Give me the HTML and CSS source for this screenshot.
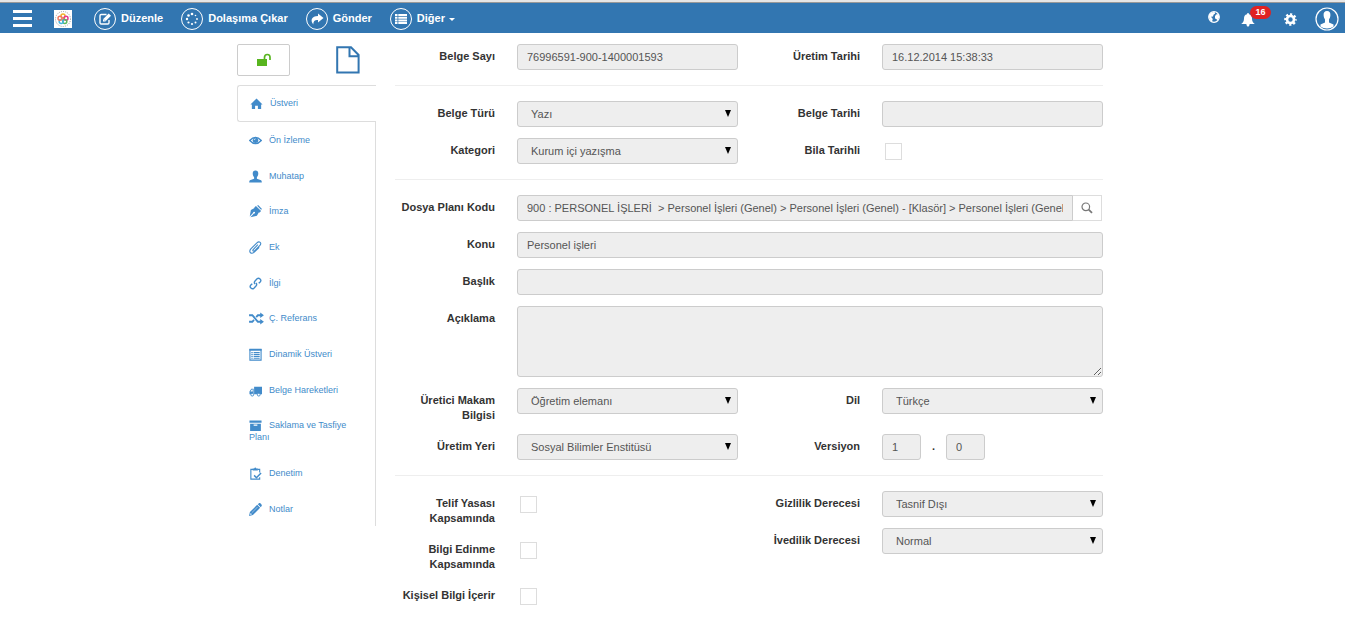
FILE: index.html
```html
<!DOCTYPE html>
<html lang="tr">
<head>
<meta charset="utf-8">
<title>Belge</title>
<link rel="stylesheet" href="styles.css">
</head>
<body>
<header class="topbar">
  <button class="menu-btn" aria-label="Menü"><span class="bar"></span><span class="bar"></span><span class="bar"></span></button>
  <a href="#" class="logo" aria-label="Ana sayfa">
    <svg width="18" height="18" viewBox="0 0 18 18"><rect width="18" height="18" fill="#fff"/><circle cx="9" cy="9" r="7.5" fill="none" stroke="#9a9a9a" stroke-width="1" stroke-dasharray="1 1.2"/><g fill="none" stroke-width="1.5"><circle cx="9" cy="6" r="2" stroke="#f0b429"/><circle cx="12" cy="8.3" r="2" stroke="#e5398d"/><circle cx="10.8" cy="11.6" r="2" stroke="#5cb85c"/><circle cx="7.2" cy="11.6" r="2" stroke="#45b5e0"/><circle cx="6" cy="8.3" r="2" stroke="#ee7b62"/></g></svg>
  </a>
  <nav class="actions">
    <button class="action"><span class="ring"><svg width="14" height="14" viewBox="0 0 14 14"><path d="M8.5 2.5H3.2Q2 2.5 2 3.7v7Q2 12 3.2 12h6.6q1.2 0 1.2-1.2V8" fill="none" stroke="#fff" stroke-width="1.4"/><path d="M5 9.5V7.2L10.7 1.5 13 3.8 7.3 9.5z" fill="#fff"/><path d="M6 7.6l1 1" stroke="#3276b1" stroke-width=".8"/></svg></span>Düzenle</button>
    <button class="action"><span class="ring"><svg width="14" height="14" viewBox="0 0 14 14" fill="#fff"><circle cx="7" cy="2" r="1.3"/><circle cx="10.5" cy="3.5" r=".8"/><circle cx="12" cy="7" r=".9"/><circle cx="10.5" cy="10.5" r="1"/><circle cx="7" cy="12" r="1.1"/><circle cx="3.5" cy="10.5" r="1.1"/><circle cx="2" cy="7" r="1.2"/><circle cx="3.5" cy="3.5" r="1.3"/></svg></span>Dolaşıma Çıkar</button>
    <button class="action"><span class="ring"><svg width="14" height="14" viewBox="0 0 14 14"><path d="M8 1.5L13.5 6 8 10.5V8C4.5 8 3.3 9.2 3.4 12.5 0 8.500 1.500 4.200 8 4z" fill="#fff"/></svg></span>Gönder</button>
    <button class="action"><span class="ring"><svg width="14" height="14" viewBox="0 0 14 14"><path d="M1 2h2.500v2H1zM4.300 2H13v2H4.300zM1 4.700h2.500v2H1zM4.300 4.700H13v2H4.300zM1 7.400h2.500v2H1zM4.300 7.400H13v2H4.300zM1 10.100h2.500v2H1zM4.300 10.100H13v2H4.300z" fill="#fff"/></svg></span>Diğer<span class="caret"></span></button>
  </nav>
  <div class="tools">
    <button class="tool globe" aria-label="Dil"><svg width="12" height="12" viewBox="0 0 12 12"><circle cx="6" cy="6" r="5.300" fill="#3276b1" stroke="#fff" stroke-width="1.200"/><path d="M1 4.500Q3 .8 6.500 1L7.200 2.500 5.500 3.800 5 5.500 3 5.800 4.800 8 4 10.500Q.8 8.500 1 4.500zM8 3.500L10.500 3 11.300 6 9.500 9.500 8.300 8 7 7.500 7 5.300z" fill="#fff"/></svg></button>
    <button class="tool bell" aria-label="Bildirimler"><svg width="14" height="14" viewBox="0 0 14 14"><path d="M7 0q1 0 1 1.200C10.200 1.700 11 3.300 11 5.500c0 2.700 1 4 2.800 5.500H.2C2 9.500 3 8.200 3 5.500 3 3.300 3.800 1.700 6 1.200Q6 0 7 0zM5.300 11h3.400Q8.300 13.800 7 13.800T5.300 11z" fill="#fff"/></svg><span class="badge">16</span></button>
    <button class="tool gear" aria-label="Ayarlar"><svg width="13" height="13" viewBox="0 0 13 13"><circle cx="6.500" cy="6.500" r="3.500" fill="none" stroke="#fff" stroke-width="2.600"/><circle cx="6.500" cy="6.500" r="5.300" fill="none" stroke="#fff" stroke-width="2" stroke-dasharray="2.200 1.963" stroke-dashoffset="1.100"/></svg></button>
    <button class="tool user" aria-label="Profil"><svg width="24" height="24" viewBox="0 0 24 24"><circle cx="12" cy="12" r="11" fill="none" stroke="#fff" stroke-width="1.200"/><path d="M12 4c2.500 0 3.600 1.700 3.400 4.300-.1 2-.7 3.200-1.400 4.100v3.200l4.500 2v1.900Q16 21.500 12 21.500T5.500 19.500v-1.900l4.500-2v-3.200c-.7-.9-1.300-2.100-1.400-4.100C8.400 5.700 9.500 4 12 4z" fill="#fff"/></svg></button>
  </div>
</header>

<main class="page">
  <aside class="side">
    <div class="side-head">
      <button class="lock" aria-label="Kilit"><svg width="16" height="14" viewBox="0 0 16 14"><rect x="1" y="6" width="10" height="7" fill="#58b51f"/><path d="M8.500 6V4.500Q8.500 1.500 11.300 1.500T14 4.500V7" fill="none" stroke="#58b51f" stroke-width="1.700"/></svg></button>
      <svg width="24" height="28" viewBox="0 0 24 28"><path d="M1.200 1.200H15L22.600 9V26.600H1.200zM13.500 1.200V10.200H22.600" fill="none" stroke="#3276b1" stroke-width="2"/></svg>
    </div>
    <ul class="tabs">
      <li class="tab active"><a href="#"><svg class="ico" viewBox="0 0 14 14"><path d="M7 1.500L13.500 8H12v5H8.500V9.500h-3V13H2V8H.5z"/></svg>Üstveri</a></li>
      <li class="tab"><a href="#"><svg class="ico" viewBox="0 0 14 14"><path d="M.8 7Q7 .2 13.200 7 7 13.800 .8 7z" fill="none" stroke="currentColor" stroke-width="1.500"/><circle cx="7" cy="6.800" r="3"/><path d="M5.500 6.500Q5.600 5.300 7 5.200" fill="none" stroke="#fff" stroke-width=".8"/></svg>Ön İzleme</a></li>
      <li class="tab"><a href="#"><svg class="ico" viewBox="0 0 14 14"><path d="M7 .5c2 0 3 1.300 3 3.300 0 1.800-.8 3.200-1.500 4V9.300l4.500 1.800q.8.500.8 2.400H.2q0-1.900.8-2.400l4.500-1.800V7.800C4.800 7 4 5.600 4 3.800 4 1.800 5 .5 7 .5z"/></svg>Muhatap</a></li>
      <li class="tab"><a href="#"><svg class="ico" viewBox="0 0 14 14"><path d="M7.500 1L13 6.500 11.500 8 10.500 8 8.500 11.500 1.500 13.200 5.300 9.200A1 1 0 1 0 4.500 8.400L.8 12.500 2 5.500 5.500 3.500 6 2.500zM8.800 .8L9.800 0l4.200 4.200-1 1z"/></svg>İmza</a></li>
      <li class="tab"><a href="#"><svg class="ico" viewBox="0 0 14 14"><path d="M9.500 4L4.500 9.300Q3.700 10.300 4.500 10.800T6.300 10.300L11.500 5Q13.500 2.800 12 1.500T8.500 2L2 8.500Q0 10.800 1.500 12.500T5.700 12L11 6.800" fill="none" stroke="currentColor" stroke-width="1.200"/></svg>Ek</a></li>
      <li class="tab"><a href="#"><svg class="ico" viewBox="0 0 14 14"><g fill="none" stroke="currentColor" stroke-width="1.500"><path d="M6.500 7.500Q5 5.800 6.500 4.200L8.700 2Q10.200 .6 11.900 2.100T12 5.300L10.500 6.800"/><path d="M7.500 6.500Q9 8.200 7.500 9.800L5.300 12Q3.800 13.400 2.100 11.900T2 8.700L3.500 7.200"/></g></svg>İlgi</a></li>
      <li class="tab"><a href="#"><svg class="ico wide" viewBox="0 0 16 14"><path d="M0 3.500h3.500L9.500 10.500H13M0 10.500h3.500L5.300 8.400M7.700 5.600L9.500 3.500H13" fill="none" stroke="currentColor" stroke-width="2"/><path d="M12 .5l4 3-4 3zM12 7.500l4 3-4 3z"/></svg>Ç. Referans</a></li>
      <li class="tab"><a href="#"><svg class="ico" viewBox="0 0 14 14"><path d="M1 1.500h12v11.500H1z" fill="none" stroke="currentColor" stroke-width="1.200"/><path d="M.5 1h13v2H.5zM2.500 4.200h1.500v1.300H2.500zM5 4.200h6.500v1.200H5zM2.500 6.300h1.500v1.300H2.500zM5 6.300h6.500v1.200H5zM2.500 8.400h1.500v1.300H2.500zM5 8.400h6.500v1.200H5zM2.500 10.500h1.500v1.200H2.500zM5 10.500h6.500v1.200H5z"/></svg>Dinamik Üstveri</a></li>
      <li class="tab"><a href="#"><svg class="ico" viewBox="0 0 14 14"><path d="M5.500 3H14v8H5.500zM5 5v6H.5V8L2.500 5zM4 6H3L1.600 8H4z" fill-rule="evenodd"/><circle cx="3.500" cy="11.500" r="1.500" fill="#fff" stroke="currentColor"/><circle cx="10.500" cy="11.500" r="1.500" fill="#fff" stroke="currentColor"/></svg>Belge Hareketleri</a></li>
      <li class="tab long"><a href="#"><svg class="ico" viewBox="0 0 14 14"><path d="M.5 1.500h13V4H.5zM1.200 5h11.600v8H1.200zM5 6v1.300h4V6z" fill-rule="evenodd"/></svg>Saklama ve Tasfiye Planı</a></li>
      <li class="tab"><a href="#"><svg class="ico" viewBox="0 0 14 14"><path d="M4.500 2.500H2v10.500h9.500V11M11.500 6V2.500H9" fill="none" stroke="currentColor" stroke-width="1.200"/><path d="M4 1.500h1.500Q6.800-.5 8 1.500h1.500v2.300H4z"/><path d="M5.500 9l2.500 2.500L13 6.500" fill="none" stroke="currentColor" stroke-width="1.600"/></svg>Denetim</a></li>
      <li class="tab"><a href="#"><svg class="ico" viewBox="0 0 14 14"><path d="M0 14L1 9.800 8.800 2 12 5.200 4.200 13zM9.500 1.300L11 0Q12-.2 13 1t.8 2L12.700 4.500zM1.800 10.800L1.200 12.800 3.200 12.200z" fill-rule="evenodd"/><path d="M3 10.500L9.300 4.200" stroke="#fff" stroke-width=".5"/></svg>Notlar</a></li>
    </ul>
  </aside>

  <form class="form">
    <section class="group">
      <label for="sayi">Belge Sayı</label>
      <input class="field" id="sayi" type="text" value="76996591-900-1400001593" disabled>
      <label for="uretim">Üretim Tarihi</label>
      <input class="field" id="uretim" type="text" value="16.12.2014 15:38:33" disabled>
    </section>
    <section class="group">
      <label for="tur">Belge Türü</label>
      <span class="pick"><select class="field" id="tur" disabled><option>Yazı</option></select></span>
      <label for="tarih">Belge Tarihi</label>
      <input class="field" id="tarih" type="text" disabled>
      <label for="kategori">Kategori</label>
      <span class="pick"><select class="field" id="kategori" disabled><option>Kurum içi yazışma</option></select></span>
      <label for="bila">Bila Tarihli</label>
      <input class="check" id="bila" type="checkbox" disabled>
    </section>
    <section class="group">
      <label for="plan">Dosya Planı Kodu</label>
      <div class="span search">
        <input class="field" id="plan" type="text" value="900 : PERSONEL İŞLERİ  &gt; Personel İşleri (Genel) &gt; Personel İşleri (Genel) - [Klasör] &gt; Personel İşleri (Genel) - [Klasör]" disabled>
        <button type="button" class="search-btn" aria-label="Ara"><svg width="12" height="12" viewBox="0 0 12 12" fill="none" stroke="#777"><circle cx="4.800" cy="4.800" r="3.800" stroke-width="1.200"/><path d="M7.700 7.700L11 10.800" stroke-width="1.800"/></svg></button>
      </div>
      <label for="konu">Konu</label>
      <input class="field span" id="konu" type="text" value="Personel işleri" disabled>
      <label for="baslik">Başlık</label>
      <input class="field span" id="baslik" type="text" disabled>
      <label for="aciklama">Açıklama</label>
      <textarea class="field span area" id="aciklama" disabled></textarea>
      <label for="makam">Üretici Makam Bilgisi</label>
      <span class="pick"><select class="field" id="makam" disabled><option>Öğretim elemanı</option></select></span>
      <label for="dil">Dil</label>
      <span class="pick"><select class="field" id="dil" disabled><option>Türkçe</option></select></span>
      <label for="yer">Üretim Yeri</label>
      <span class="pick"><select class="field" id="yer" disabled><option>Sosyal Bilimler Enstitüsü</option></select></span>
      <label for="versiyon">Versiyon</label>
      <div class="version">
        <input class="field" id="versiyon" type="text" value="1" disabled>
        <span class="dot">.</span>
        <input class="field" type="text" value="0" aria-label="Alt versiyon" disabled>
      </div>
    </section>
    <section class="halves">
      <div class="half">
        <label for="telif">Telif Yasası Kapsamında</label>
        <input class="check" id="telif" type="checkbox" disabled>
        <label for="edinme">Bilgi Edinme Kapsamında</label>
        <input class="check" id="edinme" type="checkbox" disabled>
        <label for="kisisel">Kişisel Bilgi İçerir</label>
        <input class="check" id="kisisel" type="checkbox" disabled>
      </div>
      <div class="half">
        <label for="gizlilik">Gizlilik Derecesi</label>
        <span class="pick"><select class="field" id="gizlilik" disabled><option>Tasnif Dışı</option></select></span>
        <label for="ivedilik">İvedilik Derecesi</label>
        <span class="pick"><select class="field" id="ivedilik" disabled><option>Normal</option></select></span>
      </div>
    </section>
  </form>
</main>
</body>
</html>
```

FILE: styles.css
```css
* { box-sizing: border-box; }

body {
  margin: 0;
  background: #fff;
  color: #333;
  font: 11px/15px "Liberation Sans", Arial, sans-serif;
}

button, input, select, textarea { font: inherit; margin: 0; }
button { border: 0; padding: 0; background: none; cursor: pointer; }
svg { display: block; }

/* Top bar */
.topbar {
  display: flex;
  align-items: center;
  height: 33px;
  padding: 0 6px 0 13px;
  background: #3276b1;
  border-top: 2px solid #e6e6e6;
  box-shadow: inset 0 1px 0 #999;
}
.menu-btn { display: flex; flex-direction: column; gap: 4px; width: 19px; padding-top: 2px; }
.bar { height: 3px; background: #fff; }
.logo { margin-left: 22px; padding-top: 2px; }
.actions { display: flex; gap: 18px; margin-left: 22px; padding-top: 2px; }
.action { display: flex; align-items: center; color: #fff; font-weight: bold; }
.ring {
  display: flex;
  align-items: center;
  justify-content: center;
  width: 22px;
  height: 22px;
  margin-right: 5px;
  border: 1px solid #fff;
  border-radius: 50%;
}
.caret {
  margin: 2px 0 0 4px;
  border: 3px solid transparent;
  border-top-color: #fff;
  border-bottom: 0;
}
.tools { display: flex; align-items: center; margin-left: auto; }
.tool { position: relative; }
.globe { margin-right: 21px; padding-bottom: 2px; }
.bell { margin-right: 29px; padding-top: 4px; }
.gear { margin-right: 18px; padding-top: 4px; }
.user { padding-top: 2px; }
.badge {
  position: absolute;
  left: 9px;
  top: -3px;
  width: 21px;
  height: 13px;
  border-radius: 7px;
  background: #e02222;
  color: #fff;
  font-size: 9px;
  font-weight: bold;
  line-height: 12px;
}

/* Page */
.page {
  display: flex;
  align-items: flex-start;
  gap: 18px;
  max-width: 871px;
  margin: 0 auto;
  padding: 11px 5px 0 0;
}

/* Side tabs */
.side { flex: 0 0 140px; }
.side-head {
  display: flex;
  align-items: flex-start;
  justify-content: space-between;
  height: 41px;
  padding-right: 17px;
}
.side-head > svg { margin-top: 2px; }
.lock {
  display: flex;
  align-items: center;
  justify-content: center;
  width: 53px;
  height: 32px;
  border: 1px solid #ccc;
  border-radius: 2px;
}
.tabs {
  list-style: none;
  margin: 0 1px 0 0;
  padding: 0;
  border-right: 1px solid #ddd;
  font-size: 9px;
  line-height: 12px;
}
.tab { min-height: 36px; padding: 12px; }
.tab:nth-child(3n) { min-height: 35px; padding-bottom: 11px; }
.tab.active {
  height: 37px;
  margin-right: -1px;
  padding-top: 11px;
  background: #fff;
  border: 1px solid #ddd;
  border-right: 0;
  border-radius: 3px 0 0 3px;
}
.tab a { color: #428bca; text-decoration: none; }
.ico {
  display: inline-block;
  width: 13px;
  height: 13px;
  margin: -3px 7px -3px 0;
  vertical-align: middle;
  fill: currentColor;
}
.ico.wide { width: 15px; margin-right: 5px; }

/* Form */
.form { flex: 1; min-width: 0; }
.group {
  display: grid;
  grid-template-columns: 100px 1fr 100px 1fr;
  gap: 11px 22px;
  align-items: start;
  padding-bottom: 15px;
  margin-bottom: 15px;
  border-bottom: 1px solid #eee;
}
.halves { display: grid; grid-template-columns: 1fr 1fr; gap: 22px; }
.half {
  display: grid;
  grid-template-columns: 100px 1fr;
  gap: 11px 22px;
  align-items: start;
  align-content: start;
}
label { padding-top: 5px; text-align: right; font-weight: bold; }
.field {
  display: block;
  width: 100%;
  min-width: 0;
  height: 26px;
  padding: 0 9px;
  border: 1px solid #ccc;
  border-radius: 3px;
  background: #eee;
  color: #555;
  opacity: 1;
}
.span { grid-column: 2 / -1; }
.area { height: 71px; }
.pick { position: relative; display: block; }
.pick select { appearance: none; padding: 0 20px 0 13px; }
.pick::after {
  content: "";
  position: absolute;
  right: 7px;
  top: 9px;
  border: 3px solid transparent;
  border-top: 7px solid #000;
  border-bottom: 0;
}
.search { display: flex; padding-right: 1px; }
.search .field { border-radius: 3px 0 0 3px; }
.search-btn {
  display: flex;
  flex: 0 0 30px;
  align-items: center;
  justify-content: center;
  margin-left: -1px;
  border: 1px solid #ddd;
  border-left-color: #ccc;
  background: #fff;
}
.version { display: flex; }
.version .field { flex: 0 0 39px; }
.dot { flex: 0 0 25px; padding-top: 5px; text-align: center; font-weight: bold; }
.check {
  appearance: none;
  width: 17px;
  height: 17px;
  margin: 5px 0 0 3px;
  border: 1px solid #ddd;
  background: #fff;
}
```
